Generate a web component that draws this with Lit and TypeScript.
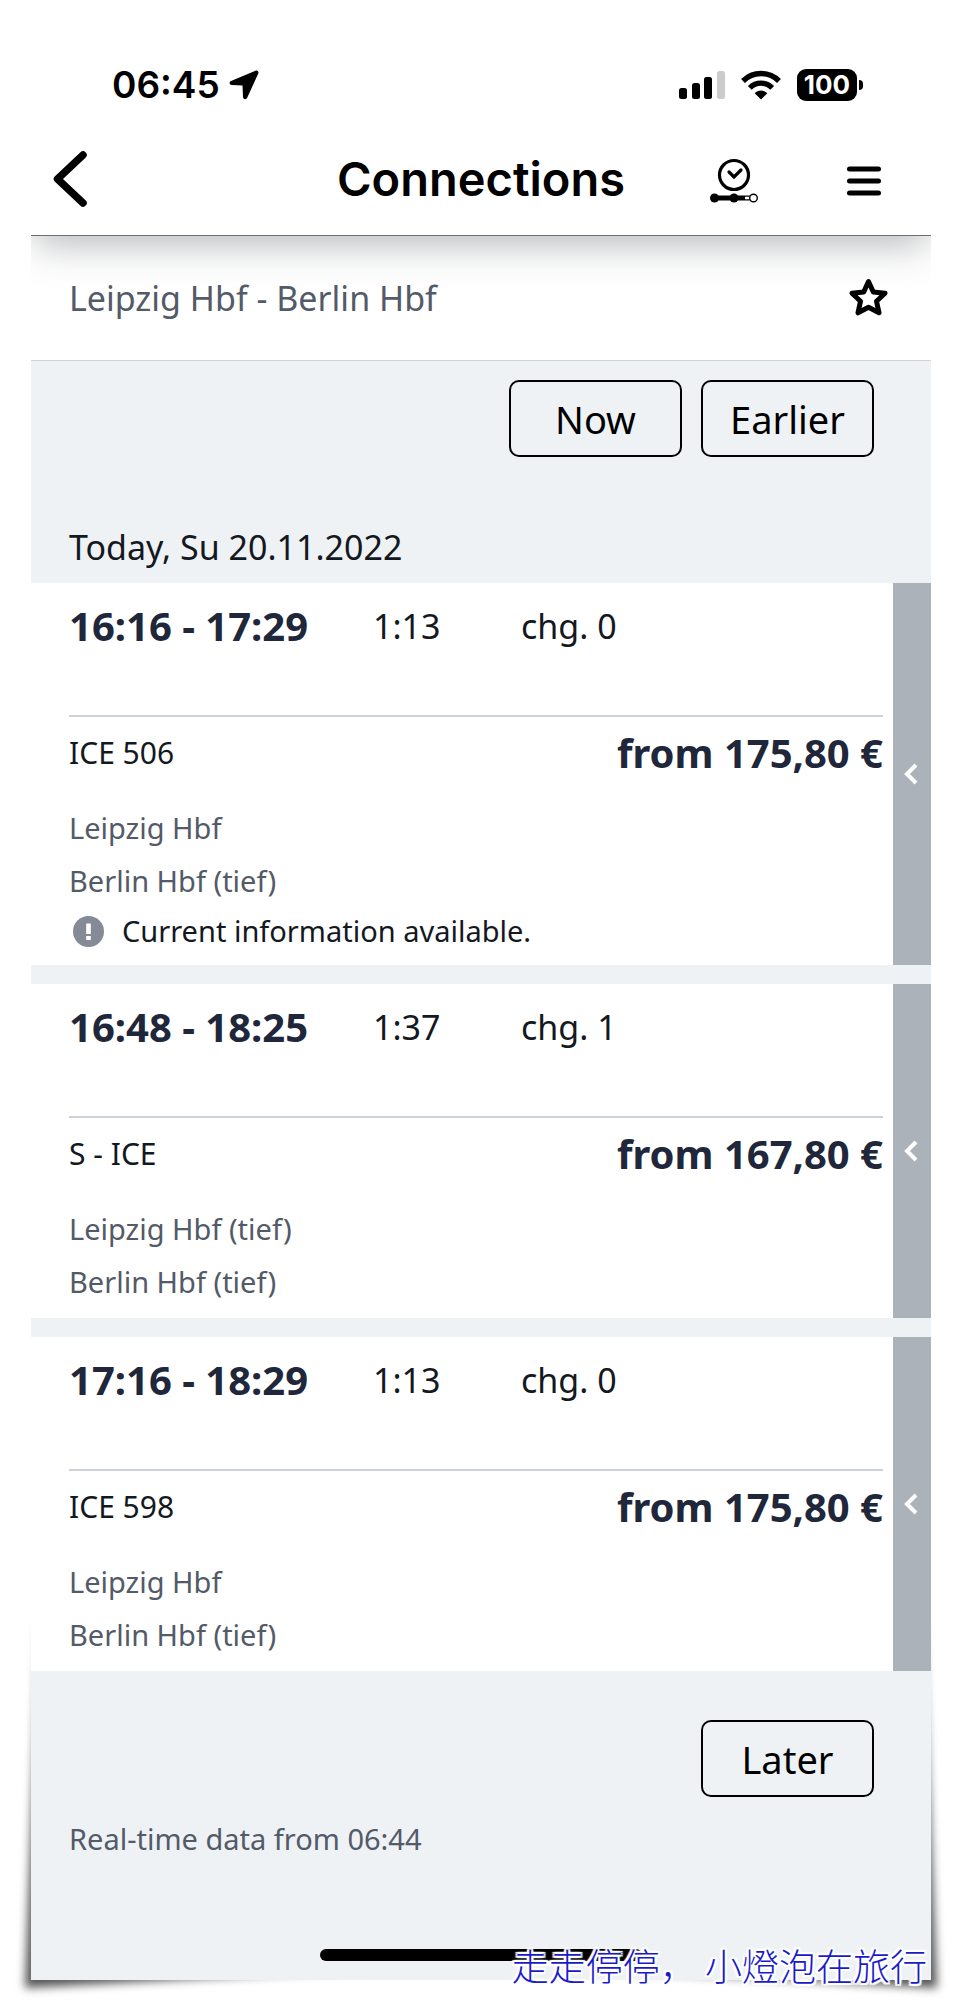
import { LitElement, html, css, nothing } from "lit";
import { customElement, property } from "lit/decorators.js";

interface Connection {
  times: string;
  duration: string;
  changes: number;
  train: string;
  price: string;
  from: string;
  to: string;
  notice?: string;
}

const CONNECTIONS: Connection[] = [
  {
    times: "16:16 - 17:29",
    duration: "1:13",
    changes: 0,
    train: "ICE 506",
    price: "175,80 €",
    from: "Leipzig Hbf",
    to: "Berlin Hbf (tief)",
    notice: "Current information available.",
  },
  {
    times: "16:48 - 18:25",
    duration: "1:37",
    changes: 1,
    train: "S - ICE",
    price: "167,80 €",
    from: "Leipzig Hbf (tief)",
    to: "Berlin Hbf (tief)",
  },
  {
    times: "17:16 - 18:29",
    duration: "1:13",
    changes: 0,
    train: "ICE 598",
    price: "175,80 €",
    from: "Leipzig Hbf",
    to: "Berlin Hbf (tief)",
  },
];

const buttonReset = css`
  button {
    margin: 0;
    padding: 0;
    border: 0;
    background: none;
    color: inherit;
    font: inherit;
    cursor: pointer;
  }
  svg {
    display: block;
  }
`;

@customElement("status-bar")
export class StatusBar extends LitElement {
  static styles = css`
    :host {
      display: flex;
      align-items: center;
      justify-content: space-between;
      height: 108px;
      padding: 0 68px 0 81px;
      font-family: Inter, sans-serif;
      color: #000;
    }
    svg {
      display: block;
    }
    .group {
      display: flex;
      align-items: center;
    }
    .clock {
      gap: 9px;
      font-size: 37px;
      font-weight: 600;
      line-height: 44px;
    }
    .signals {
      gap: 16px;
    }
    .battery {
      display: flex;
      align-items: center;
      gap: 2px;
    }
    .level {
      width: 60px;
      border-radius: 9px;
      background: #000;
      color: #fff;
      font-size: 26px;
      font-weight: 700;
      line-height: 32px;
      text-align: center;
    }
    .nub {
      width: 4px;
      height: 10px;
      border-radius: 0 5px 5px 0;
      background: #000;
    }
  `;

  render() {
    return html`
      <div class="group clock">
        <span>06:45</span>
        <svg width="30" height="30" viewBox="0 0 30 30" aria-hidden="true">
          <path
            d="M26.500.8 2 11C-.2 12 .4 14.800 2.800 15L13.500 15.600 14 27C14.200 29.500 17.200 29.900 18.200 27.700L29.300 3.400C30 1.500 28.300 0 26.500.8Z"
          />
        </svg>
      </div>
      <div class="group signals">
        <svg width="46" height="30" viewBox="0 0 46 30" aria-hidden="true">
          <rect x="0" y="18" width="8" height="11" rx="2.500" />
          <rect x="13" y="13" width="8" height="16" rx="2.500" />
          <rect x="25" y="7" width="8" height="22" rx="2.500" />
          <rect x="38" y="1" width="8" height="28" rx="2.500" fill="#ccc" />
        </svg>
        <svg width="40" height="30" viewBox="0 0 40 30" aria-hidden="true">
          <g fill="none" stroke="#000" stroke-width="5.400">
            <path d="M2 11C12 1 28 1 38 11" />
            <path d="M8.800 17.800C15 11.600 25 11.600 31.200 17.800" />
          </g>
          <path d="M20 29.500 13.700 23.200C17.200 19.700 22.800 19.700 26.300 23.200Z" />
        </svg>
        <div class="battery">
          <span class="level">100</span>
          <span class="nub"></span>
        </div>
      </div>
    `;
  }
}

@customElement("title-bar")
export class TitleBar extends LitElement {
  static styles = [
    buttonReset,
    css`
      :host {
        display: grid;
        grid-template-columns: 1fr auto 1fr;
        align-items: center;
        height: 80px;
        padding: 0 50px 16px 21px;
        font-family: Inter, sans-serif;
        color: #000;
      }
      h1 {
        margin: 0 0 0 29px;
        font-size: 47px;
        font-weight: 600;
        line-height: 56px;
      }
      .back {
        justify-self: start;
      }
      .actions {
        display: flex;
        justify-content: flex-end;
        align-items: center;
        gap: 88px;
      }
    `,
  ];

  render() {
    return html`
      <button class="back" aria-label="Back">
        <svg width="36" height="58" viewBox="0 0 36 58">
          <path
            d="M31 5 5.500 29 31 53"
            fill="none"
            stroke="#000"
            stroke-width="7.500"
            stroke-linecap="round"
            stroke-linejoin="round"
          />
        </svg>
      </button>
      <h1>Connections</h1>
      <div class="actions">
        <button aria-label="Real-time journey">
          <svg width="50" height="48" viewBox="0 0 50 48">
            <g fill="none" stroke="#000">
              <circle cx="25" cy="20" r="14.500" stroke-width="3.200" />
              <path
                d="M20 17 25 22 32 15"
                stroke-width="3.200"
                stroke-linecap="round"
              />
              <path d="M5 43H36" stroke-width="5" />
              <path d="M36 41.200H41M36 44.800H41" stroke-width="1.200" />
              <circle cx="44.500" cy="43" r="3.800" stroke-width="1.400" fill="#fff" />
            </g>
            <circle cx="5.500" cy="43" r="4.500" />
            <circle cx="25" cy="43" r="4.500" />
          </svg>
        </button>
        <button aria-label="Menu">
          <svg width="34" height="34" viewBox="0 0 34 34">
            <path
              d="M2.500 7H31.500M2.500 19H31.500M2.500 31H31.500"
              fill="none"
              stroke="#000"
              stroke-width="5"
              stroke-linecap="round"
            />
          </svg>
        </button>
      </div>
    `;
  }
}

@customElement("connection-card")
export class ConnectionCard extends LitElement {
  @property({ attribute: false }) connection!: Connection;

  static styles = [
    buttonReset,
    css`
      :host {
        display: flex;
        background: #fff;
        color: #131821;
      }
      .details {
        flex: 1;
        padding: 19px 10px 10px 38px;
      }
      .summary {
        display: grid;
        grid-template-columns: 304px 148px 1fr;
        align-items: center;
        padding-bottom: 65px;
        border-bottom: 2px solid #cdd2d8;
        font-size: 34px;
        line-height: 48px;
      }
      .strong {
        color: #20273a;
        font-size: 40px;
        font-weight: 700;
      }
      .offer {
        display: flex;
        align-items: center;
        justify-content: space-between;
        padding: 12px 0 24px;
        font-size: 30px;
        line-height: 48px;
      }
      .stations {
        margin: 0;
        padding: 0;
        list-style: none;
        color: #535a68;
        font-size: 29px;
        line-height: 53px;
      }
      .notice {
        display: flex;
        align-items: center;
        gap: 18px;
        padding-left: 4px;
        font-size: 29px;
        line-height: 48px;
      }
      .expand {
        display: flex;
        flex: 0 0 38px;
        align-items: center;
        justify-content: center;
        background: #abb2ba;
      }
    `,
  ];

  render() {
    const c = this.connection;
    return html`
      <div class="details">
        <div class="summary">
          <span class="strong">${c.times}</span>
          <span>${c.duration}</span>
          <span>chg. ${c.changes}</span>
        </div>
        <div class="offer">
          <span>${c.train}</span>
          <span class="strong">from ${c.price}</span>
        </div>
        <ul class="stations">
          <li>${c.from}</li>
          <li>${c.to}</li>
        </ul>
        ${c.notice
          ? html`<div class="notice">
              <svg width="31" height="31" viewBox="0 0 31 31" aria-hidden="true">
                <circle cx="15.500" cy="15.500" r="15.500" fill="#858a97" />
                <path d="M13.200 7.500H17.800V18H13.200ZM13.200 20H17.800V24H13.200Z" fill="#fff" />
              </svg>
              <span>${c.notice}</span>
            </div>`
          : nothing}
      </div>
      <button class="expand" aria-label="Show details">
        <svg width="16" height="22" viewBox="0 0 16 22">
          <path d="M12 2 3 11 12 20" fill="none" stroke="#fff" stroke-width="4" />
        </svg>
      </button>
    `;
  }
}

@customElement("app-root")
export class AppRoot extends LitElement {
  static styles = [
    buttonReset,
    css`
      :host {
        display: block;
        padding: 31px;
        background: #fff;
        font-family: "Noto Sans", sans-serif;
      }
      .sheet {
        position: relative;
        isolation: isolate;
      }
      /* Lifted-corner shadow that shows below and beside the sheet. */
      .lift {
        position: absolute;
        inset: 0 -6px -8px;
        z-index: -1;
        filter: blur(5px);
      }
      .lift-shape {
        height: 100%;
        background: #555;
        clip-path: polygon(
          0 100%,
          14px calc(100% - 360px),
          calc(100% - 14px) calc(100% - 360px),
          100% 100%,
          calc(100% - 360px) calc(100% - 20px),
          360px calc(100% - 20px)
        );
      }
      .screen {
        overflow: hidden;
        background: #eef2f5;
      }
      .top {
        position: relative;
        z-index: 1;
        border-bottom: 1px solid #6c6e70;
        background: #fff;
        box-shadow: 0 12px 36px -4px rgba(40, 46, 56, 0.34);
      }
      .route {
        display: flex;
        align-items: center;
        justify-content: space-between;
        height: 124px;
        padding: 0 41px 0 38px;
        border-bottom: 1px solid #cfd4d9;
        background: #fff;
        color: #535a68;
      }
      h2,
      h3 {
        margin: 0;
        font-size: 34px;
        font-weight: 400;
        line-height: 40px;
      }
      .paging {
        display: flex;
        justify-content: flex-end;
        gap: 19px;
        padding: 19px 57px 0;
      }
      .paging button {
        width: 173px;
        height: 77px;
        border: 2px solid #000;
        border-radius: 10px;
        color: #000;
        font-size: 38px;
      }
      .date {
        padding: 70px 38px 16px;
        color: #131821;
      }
      .list {
        display: grid;
        gap: 19px;
      }
      .later {
        padding-top: 49px;
      }
      .updated {
        margin: 0;
        padding: 22px 38px 90px;
        color: #535a68;
        font-size: 29px;
        line-height: 40px;
      }
      .home {
        width: 322px;
        height: 12px;
        margin: 0 auto;
        border-radius: 6px;
        background: #000;
      }
      .foot {
        padding-bottom: 19px;
      }
      .signature {
        position: absolute;
        right: 4px;
        bottom: -12px;
        color: #1a1acb;
        font-family: "Noto Sans CJK SC", sans-serif;
        font-size: 37px;
        font-weight: 300;
        line-height: 54px;
        white-space: nowrap;
        text-shadow:
          2px 0 1px #fff,
          -2px 0 1px #fff,
          0 2px 1px #fff,
          0 -2px 1px #fff,
          2px 2px 1px #fff,
          -2px -2px 1px #fff,
          2px -2px 1px #fff,
          -2px 2px 1px #fff;
      }
    `,
  ];

  render() {
    return html`
      <div class="sheet">
        <div class="lift"><div class="lift-shape"></div></div>
        <div class="screen">
          <header class="top">
            <status-bar></status-bar>
            <title-bar></title-bar>
          </header>
          <div class="route">
            <h2>Leipzig Hbf - Berlin Hbf</h2>
            <button aria-label="Save as favourite">
              <svg width="42" height="40" viewBox="0 0 42 40">
                <path
                  d="M20.500 3.500 25.300 14 37 15.300 28.500 23.300 31 34.800 20.500 29.300 10 34.800 12.500 23.300 4 15.300 15.700 14Z"
                  fill="none"
                  stroke="#000"
                  stroke-width="5"
                  stroke-linejoin="round"
                />
              </svg>
            </button>
          </div>
          <main>
            <div class="paging">
              <button>Now</button>
              <button>Earlier</button>
            </div>
            <h3 class="date">Today, Su 20.11.2022</h3>
            <div class="list">
              ${CONNECTIONS.map(
                (c) => html`<connection-card .connection=${c}></connection-card>`,
              )}
            </div>
            <div class="paging later">
              <button>Later</button>
            </div>
            <p class="updated">Real-time data from 06:44</p>
          </main>
          <div class="foot"><div class="home"></div></div>
        </div>
        <div class="signature" lang="zh">走走停停， 小燈泡在旅行</div>
      </div>
    `;
  }
}
